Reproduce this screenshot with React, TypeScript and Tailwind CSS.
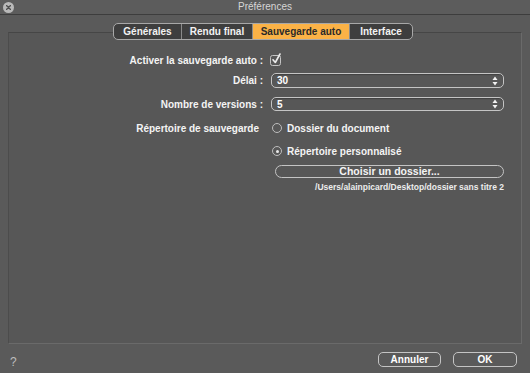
import React from 'react';

const font = { fontFamily: '"Liberation Sans", Arial, sans-serif' };

const tabs = [
  { label: 'Générales', width: 'w-[67px]' },
  { label: 'Rendu final', width: 'w-[71px]' },
  { label: 'Sauvegarde auto', width: 'w-[97px]', active: true },
  { label: 'Interface', width: 'w-[63px]' },
];

function Stepper() {
  return (
    <svg width="6" height="10" viewBox="0 0 6 10" className="shrink-0">
      <path d="M3 0.5 L5.5 4 L0.5 4 Z" fill="#f2f2f2" />
      <path d="M3 9.5 L5.5 6 L0.5 6 Z" fill="#f2f2f2" />
    </svg>
  );
}

function Select({ value }: { value: string }) {
  return (
    <div className="flex h-full w-[233px] items-center justify-between rounded-[5px] border border-[#c4c4c4] pl-[5px] pr-[5px] shadow-[inset_0_1px_1px_rgba(0,0,0,0.25)]">
      <span className="text-[10px] font-bold text-white">{value}</span>
      <Stepper />
    </div>
  );
}

function Radio({ checked }: { checked?: boolean }) {
  return (
    <span className="flex h-[10px] w-[10px] shrink-0 items-center justify-center rounded-full border border-[#bdbdbd]">
      {checked && <span className="h-[3px] w-[3px] rounded-full bg-[#e8e8e8]" />}
    </span>
  );
}

function Label({ children, className = '' }: { children: React.ReactNode; className?: string }) {
  return (
    <div className={`w-[254px] shrink-0 text-right text-[10px] font-bold text-[#f4f4f4] ${className}`}>
      {children}
    </div>
  );
}

export default function App() {
  return (
    <div className="flex h-[373px] w-[530px] flex-col overflow-hidden bg-[#5a5a5a]" style={font}>
      {/* title bar */}
      <div className="relative flex h-[15px] shrink-0 items-center justify-center border-b border-[#3d3d3d] bg-[#5c5c5c]">
        <span className="absolute left-[3px] top-[2px] flex h-[11px] w-[11px] items-center justify-center rounded-full bg-[#b9b9b9]">
          <svg width="5" height="5" viewBox="0 0 5 5">
            <path d="M0.5 0.5 L4.5 4.5 M4.5 0.5 L0.5 4.5" stroke="#505050" strokeWidth="1.4" strokeLinecap="round" />
          </svg>
        </span>
        <span className="text-[10px] leading-none text-[#d6d6d6]">Préférences</span>
      </div>

      {/* tabs */}
      <div className="relative z-10 mt-[8px] flex pl-[113px]">
        <div className="flex h-[17px] overflow-hidden rounded-[5px] border border-[#a8a8a8] bg-[#3e3e3e]">
          {tabs.map((t, i) => (
            <div
              key={t.label}
              className={`flex items-center justify-center text-[10px] font-bold ${t.width} ${
                i > 0 ? 'border-l border-[#8a8a8a]' : ''
              } ${t.active ? 'bg-[#fbb246] text-[#2a2a2a]' : 'text-[#f2f2f2]'}`}
            >
              {t.label}
            </div>
          ))}
        </div>
      </div>

      {/* panel */}
      <div className="mx-[8px] -mt-[8px] flex h-[312px] shrink-0 flex-col border border-t-[#464646] border-l-[#4c4c4c] border-r-[#6a6a6a] border-b-[#6a6a6a] bg-[#575757] pt-[21px]">
        <div className="flex h-[12px] items-center gap-[7px]">
          <Label>Activer la sauvegarde auto :</Label>
          <svg width="13" height="13" viewBox="0 0 13 13" className="-mt-[1px]">
            <rect x="0.5" y="2.5" width="10" height="10" rx="2" fill="none" stroke="#c4c4c4" />
            <path d="M3 6.8 L5.3 9.5 L10 1" fill="none" stroke="#ececec" strokeWidth="1.6" strokeLinecap="round" strokeLinejoin="round" />
          </svg>
        </div>

        <div className="mt-[7px] flex h-[15px] items-center gap-[8px]">
          <Label>Délai :</Label>
          <Select value="30" />
        </div>

        <div className="mt-[9px] flex h-[14px] items-center gap-[8px]">
          <Label>Nombre de versions :</Label>
          <Select value="5" />
        </div>

        <div className="mt-[10px] flex h-[14px] items-center">
          <Label className="pr-[4px]">Répertoire de sauvegarde</Label>
          <div className="ml-[9px] flex items-center gap-[5px]">
            <Radio />
            <span className="text-[10px] font-bold text-[#f4f4f4]">Dossier du document</span>
          </div>
        </div>

        <div className="mt-[9px] flex h-[14px] items-center pl-[263px]">
          <div className="flex items-center gap-[5px]">
            <Radio checked />
            <span className="text-[10px] font-bold text-[#f4f4f4]">Répertoire personnalisé</span>
          </div>
        </div>

        <div className="mt-[7px] flex h-[13px] pl-[266px]">
          <div className="flex w-[229px] items-center justify-center rounded-full border border-[#c4c4c4] text-[10.5px] font-bold leading-none text-[#f4f4f4]">
            Choisir un dossier...
          </div>
        </div>

        <div className="mt-[4px] flex h-[10px] w-[495px] items-center justify-end">
          <span className="text-[8.5px] font-bold leading-none text-[#ececec]">
            /Users/alainpicard/Desktop/dossier sans titre 2
          </span>
        </div>
      </div>

      {/* footer */}
      <div className="flex items-start pt-[8px]">
        <span className="ml-[10px] mt-[4px] text-[12px] leading-none text-[#bdbdbd]">?</span>
        <div className="ml-auto flex gap-[12px] pr-[13px]">
          <div className="flex h-[15px] w-[63px] items-center justify-center rounded-[5px] border border-[#c4c4c4] text-[10px] font-bold text-white">
            Annuler
          </div>
          <div className="flex h-[15px] w-[64px] items-center justify-center rounded-[5px] border border-[#c4c4c4] text-[10px] font-bold text-white">
            OK
          </div>
        </div>
      </div>
    </div>
  );
}
